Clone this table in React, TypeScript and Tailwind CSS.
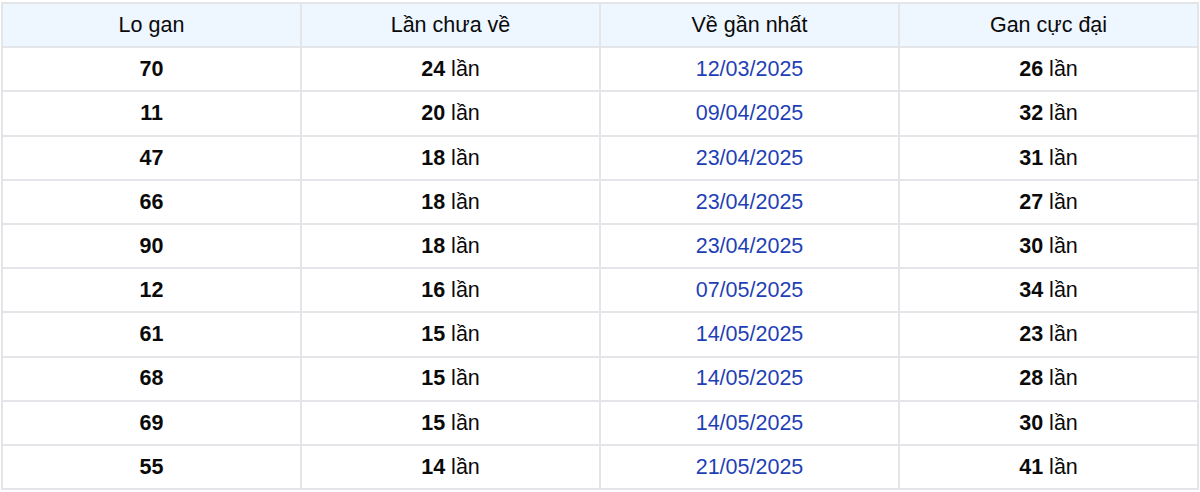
import React from "react";

const rows = [
  ["70", "24", "12/03/2025", "26"],
  ["11", "20", "09/04/2025", "32"],
  ["47", "18", "23/04/2025", "31"],
  ["66", "18", "23/04/2025", "27"],
  ["90", "18", "23/04/2025", "30"],
  ["12", "16", "07/05/2025", "34"],
  ["61", "15", "14/05/2025", "23"],
  ["68", "15", "14/05/2025", "28"],
  ["69", "15", "14/05/2025", "30"],
  ["55", "14", "21/05/2025", "41"],
];

const cell = "border-2 border-[#e3e5e8] h-[44.2px] p-0 text-center align-middle";

export default function App() {
  return (
    <div className="bg-white w-[1200px] h-[492px] pt-[2px] pl-[1px] font-['Liberation_Sans',Arial,sans-serif] text-[21.5px] text-[#0a0a0a]">
      <table className="w-[1198px] border-collapse table-fixed">
        <thead>
          <tr className="bg-[#eef6ff]">
            <th className={`${cell} font-normal`}>Lo gan</th>
            <th className={`${cell} font-normal`}>Lần chưa về</th>
            <th className={`${cell} font-normal`}>Về gần nhất</th>
            <th className={`${cell} font-normal`}>Gan cực đại</th>
          </tr>
        </thead>
        <tbody>
          {rows.map(([lo, chua, date, max], i) => (
            <tr key={i}>
              <td className={`${cell} font-bold`}>{lo}</td>
              <td className={cell}>
                <b>{chua}</b> lần
              </td>
              <td className={`${cell} text-[#1f3fb5]`}>{date}</td>
              <td className={cell}>
                <b>{max}</b> lần
              </td>
            </tr>
          ))}
        </tbody>
      </table>
    </div>
  );
}
